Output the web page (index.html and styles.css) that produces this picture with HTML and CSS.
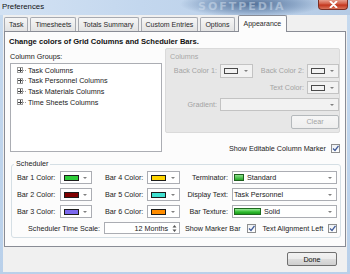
FILE: index.html
```html
<!DOCTYPE html>
<html>
<head>
<meta charset="utf-8">
<link rel="stylesheet" href="styles.css">
</head>
<body>
<div class="win">
  <div class="title">
    <span class="title-text">Preferences</span>
    <span class="wm">SOFTPEDIA</span>
    <span class="close"><svg width="9" height="7" viewBox="0 0 9 7"><path d="M1.5 0.5 L7.5 6.5 M7.5 0.5 L1.5 6.5" stroke="#fff" stroke-width="1.8" stroke-linecap="round"/></svg></span>
  </div>
  <div class="client">
    <div class="tabs">
      <div class="tab">Task</div>
      <div class="tab">Timesheets</div>
      <div class="tab">Totals Summary</div>
      <div class="tab">Custom Entries</div>
      <div class="tab">Options</div>
      <div class="tab active">Appearance</div>
    </div>
    <div class="page">
      <div class="heading">Change colors of Grid Columns and Scheduler Bars.</div>
      <div class="top">
        <div class="groups">
          <div class="lbl">Column Groups:</div>
          <div class="tree">
            <div class="node"><span class="plus"></span><span class="dots"></span>Task Columns</div>
            <div class="node"><span class="plus"></span><span class="dots"></span>Task Personnel Columns</div>
            <div class="node"><span class="plus"></span><span class="dots"></span>Task Materials Columns</div>
            <div class="node"><span class="plus"></span><span class="dots"></span>Time Sheets Columns</div>
          </div>
        </div>
        <div class="right">
          <div class="colbox">
            <div class="cap">Columns</div>
            <div class="colgrid">
              <span class="dlbl">Back Color 1:</span>
              <span class="dd dis"><span class="sw empty"></span><span class="arr"></span></span>
              <span class="dlbl">Back Color 2:</span>
              <span class="dd dis"><span class="sw empty"></span><span class="arr"></span></span>
              <span class="dlbl span3">Text Color:</span>
              <span class="dd dis"><span class="sw empty"></span><span class="arr"></span></span>
              <span class="dlbl">Gradient:</span>
              <span class="dd dis span-rest"><span class="arr"></span></span>
              <span class="btn clear">Clear</span>
            </div>
          </div>
          <div class="marker">Show Editable Column Marker <span class="chk"><svg width="7" height="7" viewBox="0 0 7 7"><path d="M1 3.5 L3 5.5 L6.5 0.8" fill="none" stroke="#3f5a98" stroke-width="1.3"/></svg></span></div>
        </div>
      </div>
      <div class="sched">
        <span class="sched-lbl">Scheduler</span>
        <div class="sgrid">
          <span class="slbl">Bar 1 Color:</span>
          <span class="dd"><span class="sw c1"></span><span class="arr"></span></span>
          <span class="slbl mid">Bar 4 Color:</span>
          <span class="dd"><span class="sw c4"></span><span class="arr"></span></span>
          <span class="slbl rt">Terminator:</span>
          <span class="dd wide"><span class="term"></span>Standard<span class="arr"></span></span>

          <span class="slbl">Bar 2 Color:</span>
          <span class="dd"><span class="sw c2"></span><span class="arr"></span></span>
          <span class="slbl mid">Bar 5 Color:</span>
          <span class="dd"><span class="sw c5"></span><span class="arr"></span></span>
          <span class="slbl rt">Display Text:</span>
          <span class="dd wide">Task Personnel<span class="arr"></span></span>

          <span class="slbl">Bar 3 Color:</span>
          <span class="dd"><span class="sw c3"></span><span class="arr"></span></span>
          <span class="slbl mid">Bar 6 Color:</span>
          <span class="dd"><span class="sw c6"></span><span class="arr"></span></span>
          <span class="slbl rt">Bar Texture:</span>
          <span class="dd wide"><span class="tex"></span>Solid<span class="arr"></span></span>

          <div class="scale">
            <span>Scheduler Time Scale:</span>
            <span class="spin"><span class="spinval">12 Months</span><span class="spinbtn"><svg width="5" height="9" viewBox="0 0 5 9"><path d="M0.5 3.5 L2.5 1 L4.5 3.5 Z M0.5 5.5 L2.5 8 L4.5 5.5 Z" fill="#555"/></svg></span></span>
          </div>
          <div class="flags">
            <span>Show Marker Bar</span>
            <span class="chk c-first"><svg width="7" height="7" viewBox="0 0 7 7"><path d="M1 3.5 L3 5.5 L6.5 0.8" fill="none" stroke="#3f5a98" stroke-width="1.3"/></svg></span>
            <span class="t-second">Text Alignment Left</span>
            <span class="chk c-last"><svg width="7" height="7" viewBox="0 0 7 7"><path d="M1 3.5 L3 5.5 L6.5 0.8" fill="none" stroke="#3f5a98" stroke-width="1.3"/></svg></span>
          </div>
        </div>
      </div>
    </div>
    <div class="footer"><span class="btn done">Done</span></div>
  </div>
</div>
</body>
</html>
```
FILE: styles.css
```css
* { box-sizing: border-box; }
html, body { margin: 0; padding: 0; }
body { font-family: "Liberation Sans", Arial, sans-serif; font-size: 7.2px; color: #1a1a1a; }

.win {
  width: 350px; height: 274px; display: flex; flex-direction: column;
  background: linear-gradient(#c6daef, #b9d0ea);
  overflow: hidden;
}
.title {
  height: 15px; flex: none; display: flex; align-items: flex-start;
  position: relative; padding-left: 2px;
  background:
    radial-gradient(ellipse 72px 13px at 252px 4px, rgba(78,108,148,0.95), rgba(110,140,178,0.6) 60%, rgba(190,212,236,0) 100%),
    linear-gradient(90deg, #d3e2f3 0%, #c3d7ee 40%, #b5cbe5 100%);
}
.title-text { font-size: 7.8px; line-height: 14px; color: #111; }
.wm {
  position: absolute; left: 198px; top: 1px; font: bold 11px "DejaVu Sans", sans-serif;
  letter-spacing: 2px; color: rgba(214,226,240,0.5); line-height: 12px;
}
.close {
  position: absolute; right: 2px; top: 0; width: 30px; height: 10px;
  background: linear-gradient(#e6a08f 0%, #d25a42 45%, #c2341c 55%, #d9755c 100%);
  border: 1px solid #7b2f24; border-top: none; border-radius: 0 0 4px 4px;
  display: flex; align-items: center; justify-content: center;
}

.client {
  flex: 1; margin: 0 3px 2px 3px; background: #f0f0f0;
  display: flex; flex-direction: column;
}
.tabs { height: 16px; display: flex; align-items: flex-end; padding-left: 1px; gap: 2px; }
.tab {
  height: 14px; line-height: 13px; padding: 0 4px;
  border: 1px solid #a7aab1; border-bottom: none; border-radius: 2px 2px 0 0;
  background: linear-gradient(#f6f6f6, #e3e3e3); color: #2a2a2a; font-size: 7px;
}
.tab.active {
  height: 17px; margin-bottom: -1px; margin-left: 1px; line-height: 15px;
  background: #fcfcfc; border-color: #898c95; position: relative; z-index: 1; padding: 0 5px;
}

.page {
  margin-left: 1px; width: 342px; height: 216px; flex: none;
  border: 1px solid #898c95; background: #fcfcfc;
  padding: 5px 5px 0 5px;
}
.heading { font-weight: bold; font-size: 7.6px; line-height: 10px; margin-left: -1px; color: #111; }
.top { display: grid; grid-template-columns: 152px 175px; column-gap: 3px; margin-top: 1px; align-items: start; }
.lbl { padding-top: 4px; line-height: 10px; }
.tree { margin-top: 1px; height: 89px; border: 1px solid #abadb3; background: #fff; padding: 1px 0 0 6px; }
.node { height: 10.6px; display: flex; align-items: center; }
.plus {
  width: 6px; height: 6px; border: 1px solid #9a9a9a; position: relative; background: #fff;
}
.plus::before { content: ""; position: absolute; left: 0px; top: 1.5px; width: 4px; height: 1px; background: #444; }
.plus::after { content: ""; position: absolute; left: 1.5px; top: 0px; width: 1px; height: 4px; background: #444; }
.dots { width: 3px; border-top: 1px dotted #a0a0a0; margin: 0 2px 0 0; }

.colbox {
  height: 85px; background: #e7e7e7; border: 1px solid #dadada; border-radius: 2px;
}
.cap { padding: 2px 0 0 4px; line-height: 11px; color: #a7a7a7; }
.colgrid {
  display: grid; grid-template-columns: 54px 33px 54px 32px; grid-template-rows: repeat(4, 17px);
  align-items: center;
}
.dlbl { text-align: right; padding-right: 3px; color: #a3a3a3; white-space: nowrap; }
.span3 { grid-column: 3; }
.span-rest { grid-column: 2 / 5; }
.clear { grid-column: 3 / 5; justify-self: end; width: 48px; height: 14px; }

.dd {
  height: 13px; border: 1px solid #abadb3; background: #fff; display: flex; align-items: center;
  padding-left: 3px; position: relative; white-space: nowrap;
}
.dd.dis { border-color: #c3c3c3; background: #f2f2f2; }
.colgrid .dd { height: 14px; }
.colgrid .dd.span-rest, .colgrid .dd.dis:nth-child(6) { height: 13px; }
.arr {
  margin-left: auto; margin-right: 4px; width: 0; height: 0;
  border-left: 2px solid transparent; border-right: 2px solid transparent; border-top: 2px solid #808080;
}
.sw { width: 15px; height: 6px; border: 1px solid #1c1c1c; }
.sw.empty { border-color: #4a4a4a; background: transparent; width: 14px; height: 6px; }
.c1 { background: #2ecc3a; }
.c2 { background: #800000; }
.c3 { background: #7b68ee; }
.c4 { background: #ffd500; }
.c5 { background: #40e0d0; }
.c6 { background: #ff8c00; }
.term { width: 10px; height: 7px; border: 1px solid #1e5e1e; background: linear-gradient(#8be08b, #25a825); margin-right: 3px; }
.tex { width: 27px; height: 7px; border: 1px solid #1e6a1e; background: linear-gradient(#9aea9a, #2dbb2d 60%, #1d9a1d); margin-right: 3px; }
.dd.wide { padding-left: 1px; }

.marker { margin-top: 10px; height: 10px; display: flex; justify-content: flex-end; align-items: center; gap: 5px; white-space: nowrap; }
.chk {
  width: 9px; height: 9px; border: 1px solid #8e8f8f; background: linear-gradient(#eef0f3, #fff);
  display: inline-flex; align-items: center; justify-content: center; flex: none;
}

.sched {
  margin: 11px 0 0 1px; width: 330px; height: 74px;
  border: 1px solid #d5dfe5; border-radius: 3px; padding: 0 0 0 5px;
}
.sched-lbl { display: block; width: fit-content; margin: -6px 0 0 -3px; padding: 0 2px; line-height: 10px; height: 10px; background: #fcfcfc; }
.sgrid {
  display: grid; grid-template-columns: 43px 32px 55px 33px 52px 105px;
  grid-template-rows: 17px 17px 17px 16px; align-items: center;
}
.slbl { white-space: nowrap; }
.slbl.mid { padding-left: 13px; }
.slbl.rt { text-align: right; padding-right: 4px; }
.scale { grid-column: 1 / 5; display: flex; justify-content: flex-end; align-items: center; white-space: nowrap; }
.spin {
  width: 76px; height: 12px; margin-left: 4px; border: 1px solid #abadb3; background: #fff;
  display: flex; align-items: center;
}
.spinval { flex: 1; text-align: right; padding-right: 2px; }
.spinbtn { width: 9px; display: flex; justify-content: center; }
.flags { grid-column: 5 / 7; display: flex; align-items: center; padding-left: 5px; white-space: nowrap; }
.c-first { margin-left: 6px; }
.t-second { margin-left: 7px; }
.c-last { margin-left: auto; }

.btn {
  display: flex; align-items: center; justify-content: center;
  border: 1px solid #707070; border-radius: 2px;
  background: linear-gradient(#f2f2f2 0%, #ebebeb 50%, #dddddd 51%, #cfcfcf 100%);
}
.btn.clear { border-color: #b5b9bc; background: linear-gradient(#f6f6f6, #eeeeee); color: #a3a3a3; }
.footer { flex: 1; display: flex; justify-content: flex-end; align-items: flex-start; padding: 5px 10px 0 0; }
.done { width: 50px; height: 14px; color: #111; }
```
